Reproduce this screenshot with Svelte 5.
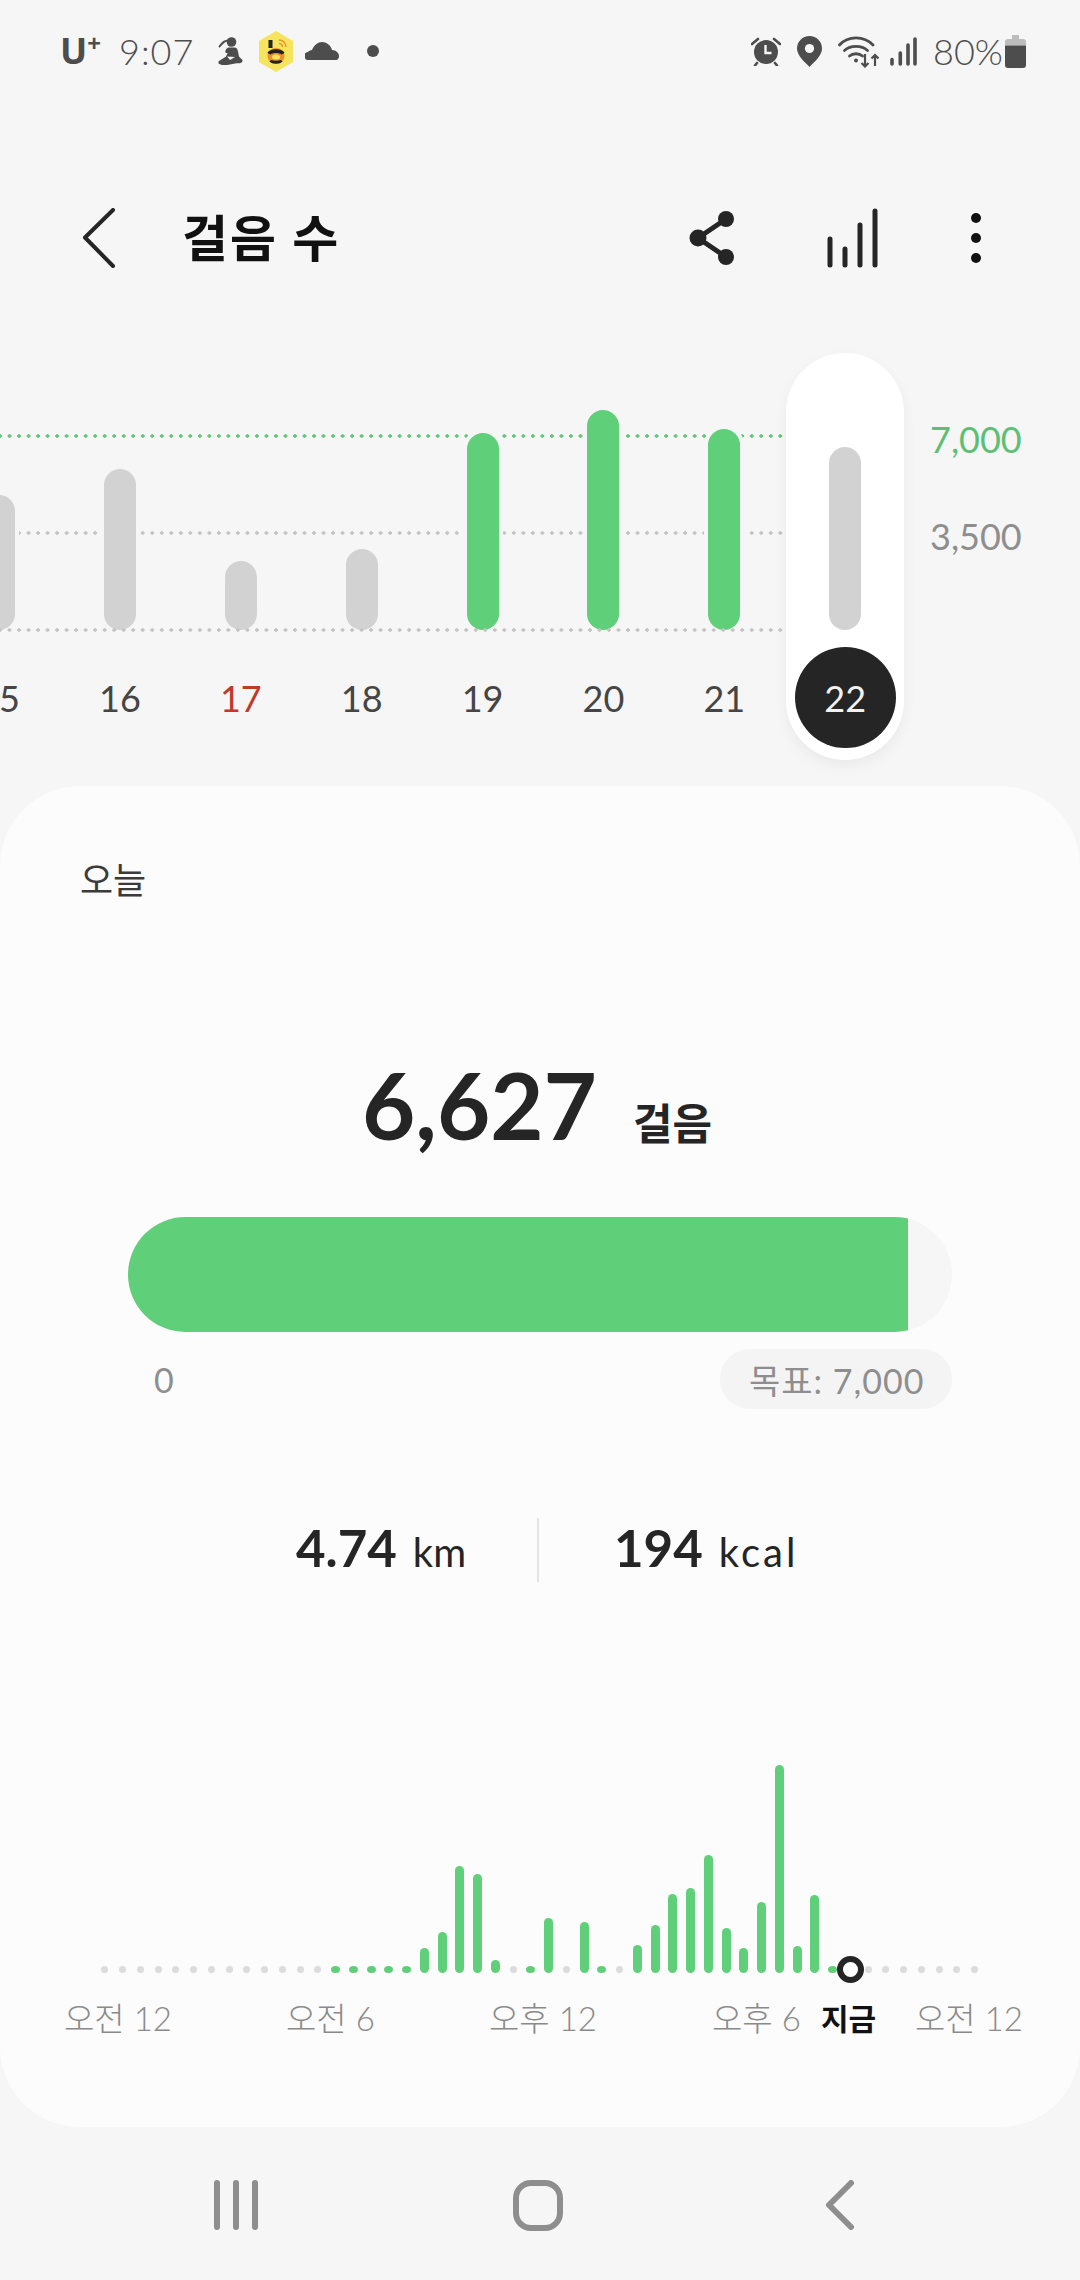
<script>
	const days = [
		{ label: '15', top: 495 },
		{ label: '16', top: 469 },
		{ label: '17', top: 561, sunday: true },
		{ label: '18', top: 549 },
		{ label: '19', top: 433, met: true },
		{ label: '20', top: 410, met: true },
		{ label: '21', top: 429, met: true },
		{ label: '22', top: 447, current: true }
	];

	// tops of the half-hour bars, by column; anything missing is a grey dot
	const barTops = {
		18: 1948, 19: 1932, 20: 1866, 21: 1874, 22: 1960, 25: 1918, 27: 1922,
		30: 1945, 31: 1925, 32: 1894, 33: 1888, 34: 1855, 35: 1928, 36: 1948,
		37: 1902, 38: 1765, 39: 1946, 40: 1895
	};
	const greenDots = [13, 14, 15, 16, 17, 24, 28, 41];
	const slots = Array.from({ length: 50 }, (_, i) => ({
		i,
		height: barTops[i] ? 1973 - barTops[i] : 0,
		kind: barTops[i] ? 'bar' : greenDots.includes(i) ? 'green' : i === 42 ? 'now' : 'idle'
	}));

	const hours = [
		{ text: '오전 12' },
		{ text: '오전 6' },
		{ text: '오후 12' },
		{ text: '오후 6' },
		{ text: '지금', strong: true },
		{ text: '오전 12' }
	];
</script>

<div class="page">
	<div class="status">
		<div class="status-left">
			<span class="carrier">U<sup>+</sup></span>
			<span class="clock">9:07</span>
			<svg class="ic-yoga" width="26" height="28" viewBox="0 0 26 28">
				<circle cx="14.500" cy="5" r="4.800" fill="#4d4d4d" />
				<path d="M11 3.500C7 3.500 5 6 2.500 9.500" fill="none" stroke="#4d4d4d" stroke-width="2" stroke-linecap="round" />
				<path d="M11 10.500h6.500c2 0 3 1.500 3.500 4l1 5 3 3c1 1 .8 2-.5 3-1.500 1-3.500.8-5 .8l-8 1.500c-3 .7-7 .7-9.500-1-1-1-.8-2 .3-3l6.500-4 2-4c-1 .7-2.500 0-2.500-1.300 0-1.500 1.200-3 3.200-4z" fill="#4d4d4d" />
				<path d="M10 19.500l8 .5-5 3z" fill="#f6f6f6" />
			</svg>
			<svg class="ic-hex" width="36" height="41" viewBox="0 0 36 41">
				<path d="M18 0l17 10v21L18 41 1 31V10z" fill="#f6e35e" />
				<rect x="10.500" y="9" width="4" height="8" fill="#222" />
				<ellipse cx="18" cy="25" rx="8.500" ry="8" fill="#e8912e" />
				<path d="M9.500 22c2-5 15-5 17 0l-3 1.500c-2-2-9-2-11 0z" fill="#222" />
				<path d="M11.500 30.500c3 3 10 3 13 0l-1.500-1.500c-3 1-7 1-10 0z" fill="#222" />
				<ellipse cx="18" cy="26" rx="4" ry="2.500" fill="#f6e35e" />
				<path d="M21 9a7 7 0 0 1 7 7M21 12.500a3.500 3.500 0 0 1 3.500 3.500" fill="none" stroke="#e8912e" stroke-width="1.300" />
			</svg>
			<svg class="ic-cloud" width="34" height="18" viewBox="0 0 34 18">
				<path d="M4 18a4 4 0 0 1-1-8c1-1 2-2 4-2 2-5 6-8 10-8s9 3 10 8c4 0 7 3 7 6 0 2-1 4-3 4z" fill="#4d4d4d" />
			</svg>
			<span class="notify-dot"></span>
		</div>
		<div class="status-right">
			<svg class="ic-alarm" width="30" height="30" viewBox="0 0 30 30">
				<circle cx="15" cy="16" r="12" fill="#4d4d4d" />
				<path d="M14.500 9v8h6" fill="none" stroke="#f6f6f6" stroke-width="2.400" />
				<path d="M1 8l6-5M29 8l-6-5" stroke="#4d4d4d" stroke-width="2.600" stroke-linecap="round" />
				<path d="M6 27l-2 2.500M24 27l2 2.500" stroke="#4d4d4d" stroke-width="2.600" stroke-linecap="round" />
			</svg>
			<svg class="ic-pin" width="25" height="31" viewBox="0 0 25 31">
				<path d="M12.500 0C5.500 0 0 5.500 0 12.500 0 20 8 26 12.500 31 17 26 25 20 25 12.500 25 5.500 19.500 0 12.500 0z" fill="#4d4d4d" />
				<circle cx="12.500" cy="12.500" r="4.600" fill="#f6f6f6" />
			</svg>
			<svg class="ic-wifi" width="43" height="33" viewBox="0 0 43 33">
				<g fill="none" stroke="#4d4d4d" stroke-width="2.800" stroke-linecap="round">
					<path d="M1.500 10C10 .5 26 .5 35 10" />
					<path d="M6.500 15.500c6-5.500 17-5.500 23 0" />
					<path d="M11.500 21c3.500-3 9.500-3 13 0" />
				</g>
				<circle cx="18" cy="25.500" r="2" fill="#4d4d4d" />
				<path d="M27 19v12.500M23.500 28l3.500 3.500 3.500-3.500M37 31V20M33.500 23.500l3.500-3.500 3.500 3.500" fill="none" stroke="#4d4d4d" stroke-width="2.200" />
			</svg>
			<svg class="ic-signal" width="27" height="29" viewBox="0 0 27 29">
				<g stroke="#4d4d4d" stroke-width="3.600" stroke-linecap="round">
					<path d="M2 22.500v4.500M10.300 16v11M18 8v19M25 2v25" />
				</g>
			</svg>
			<span class="battery-text">80%</span>
			<svg class="ic-battery" width="21" height="33" viewBox="0 0 21 33">
				<path d="M7 0h7v4h4a3 3 0 0 1 3 3v3.500H0V7a3 3 0 0 1 3-3h4z" fill="#bdbdbd" />
				<path d="M0 10.500h21V30a3 3 0 0 1-3 3H3a3 3 0 0 1-3-3z" fill="#4d4d4d" />
			</svg>
		</div>
	</div>

	<header class="bar">
		<svg class="back" width="34" height="60" viewBox="0 0 34 60">
			<path d="M31 2L3 29.500 31 58" fill="none" stroke="#252525" stroke-width="4" stroke-linecap="round" stroke-linejoin="round" />
		</svg>
		<h1>걸음 수</h1>
		<svg class="share" width="48" height="54" viewBox="0 0 48 54">
			<path d="M10 27L38 8M10 27l28 19" stroke="#252525" stroke-width="5" />
			<circle cx="10" cy="27" r="8.500" fill="#252525" />
			<circle cx="38" cy="8" r="8" fill="#252525" />
			<circle cx="38" cy="46" r="8" fill="#252525" />
		</svg>
		<svg class="trend" width="52" height="60" viewBox="0 0 52 60">
			<path d="M3 31v26M18 41v16M33 17v40M48 3v54" stroke="#252525" stroke-width="5" stroke-linecap="round" />
		</svg>
		<svg class="more" width="12" height="52" viewBox="0 0 12 52">
			<circle cx="6" cy="6" r="5" fill="#111" />
			<circle cx="6" cy="26" r="5" fill="#111" />
			<circle cx="6" cy="46" r="5" fill="#111" />
		</svg>
	</header>

	<section class="week">
		<div class="rule rule-goal"></div>
		<div class="rule rule-half"></div>
		<div class="columns">
			{#each days as day}
				<div class="col" class:current={day.current}>
					<div class="slot">
						<div class="day-bar" class:met={day.met} style="height: {630 - day.top}px"></div>
					</div>
					<div class="day" class:sunday={day.sunday}>{day.label}</div>
				</div>
			{/each}
		</div>
		<div class="rule rule-base"></div>
		<div class="scale">
			<span class="goal">7,000</span>
			<span class="half">3,500</span>
		</div>
	</section>

	<main class="card">
		<div class="today">오늘</div>

		<div class="total">
			<span class="steps">6,627</span>
			<span class="unit">걸음</span>
		</div>

		<div class="track"><div class="fill"></div></div>
		<div class="track-labels">
			<span class="zero">0</span>
			<span class="target">목표: 7,000</span>
		</div>

		<div class="stats">
			<div class="stat stat-distance"><b>4.74</b><span>km</span></div>
			<div class="stat stat-energy"><b>194</b><span>kcal</span></div>
		</div>

		<div class="plot">
			{#each slots as slot}
				<div class="tick">
					{#if slot.kind === 'bar'}
						<div class="hour-bar" style="height: {slot.height}px"></div>
					{:else if slot.kind === 'now'}
						<div class="now-ring"></div>
					{:else}
						<div class="hour-dot {slot.kind}"></div>
					{/if}
				</div>
			{/each}
		</div>
		<div class="hours">
			{#each hours as hour}
				<span class:strong={hour.strong}>{hour.text}</span>
			{/each}
		</div>
	</main>

	<nav class="softkeys">
		<svg width="48" height="50" viewBox="0 0 48 50">
			<path d="M5 3v44M24 3v44M43 3v44" stroke="#8e8e8e" stroke-width="6" stroke-linecap="round" />
		</svg>
		<svg class="home" width="50" height="51" viewBox="0 0 50 51">
			<rect x="3" y="3" width="44" height="45" rx="15" fill="none" stroke="#8e8e8e" stroke-width="6" />
		</svg>
		<svg class="recent" width="30" height="50" viewBox="0 0 30 50">
			<path d="M26 3L4 25l22 22" fill="none" stroke="#8e8e8e" stroke-width="6" stroke-linecap="round" stroke-linejoin="round" />
		</svg>
	</nav>
</div>

<style>
	:global(body) {
		margin: 0;
		background: #f6f6f6;
	}
	.page {
		width: 1080px;
		height: 2280px;
		display: flex;
		flex-direction: column;
		overflow: hidden;
		background: #f6f6f6;
		color: #252525;
		font-family: Lato, 'Noto Sans CJK KR', sans-serif;
	}

	.status {
		height: 102px;
		flex: none;
		display: flex;
		justify-content: space-between;
		align-items: center;
		padding: 0 54px 0 60px;
		color: #4d4d4d;
		box-sizing: border-box;
	}
	.status-left,
	.status-right {
		display: flex;
		align-items: center;
	}
	.carrier {
		font-family: 'Open Sans', sans-serif;
		font-size: 36px;
		font-weight: 700;
		line-height: 1;
		width: 59px;
	}
	.carrier sup {
		font-size: 24px;
		line-height: 0;
		vertical-align: 12px;
	}
	.clock {
		font-size: 36px;
		font-weight: 300;
		width: 98px;
		letter-spacing: 1px;
	}
	.ic-hex {
		margin-left: 15px;
	}
	.ic-cloud {
		margin-left: 11px;
	}
	.notify-dot {
		width: 12px;
		height: 12px;
		margin-left: 28px;
		border-radius: 50%;
		background: #4d4d4d;
	}
	.ic-pin {
		margin-left: 16px;
	}
	.ic-wifi {
		margin-left: 16px;
	}
	.ic-signal {
		margin-left: 9px;
	}
	.battery-text {
		font-size: 36px;
		font-weight: 300;
		margin-left: 16px;
		width: 72px;
	}

	.bar {
		height: 238px;
		flex: none;
		box-sizing: border-box;
		padding: 34px 0 0 82px;
		display: flex;
		align-items: center;
	}
	h1 {
		margin: 0 0 0 66px;
		font-size: 50px;
		font-weight: 700;
		line-height: 1;
		color: #111;
		width: 521px;
		letter-spacing: 2px;
	}
	.share {
		margin-left: -15px;
	}
	.trend {
		margin-left: 91px;
	}
	.more {
		margin-left: 91px;
	}

	.week {
		position: relative;
		height: 446px;
		flex: none;
	}
	.rule {
		position: absolute;
		left: 0;
		width: 786px;
		height: 4px;
		background-repeat: repeat-x;
		background-size: 9.530px 4px;
		background-position: -4.770px 0;
	}
	.rule-goal {
		top: 94px;
		background-image: radial-gradient(circle, #62c678 1.5px, transparent 2px);
	}
	.rule-half {
		top: 191px;
		background-image: radial-gradient(circle, #c4c4c4 1.5px, transparent 2px);
	}
	.rule-base {
		top: 288px;
		background-image: radial-gradient(circle, #c4c4c4 1.5px, transparent 2px);
	}
	.columns {
		position: relative;
		display: flex;
		margin-left: -60px;
		padding-top: 13px;
	}
	.col {
		width: 118px;
		margin-right: 2.900px;
		flex: none;
		height: 407px;
		border-radius: 59px;
		box-sizing: border-box;
	}
	.col.current {
		background: #fff;
		box-shadow: 0 6px 14px rgba(0, 0, 0, 0.05);
	}
	.slot {
		height: 277px;
		display: flex;
		align-items: flex-end;
		justify-content: center;
	}
	.day-bar {
		width: 32px;
		border-radius: 16px;
		background: #d2d2d2;
		box-shadow: 0 0 0 4px #f6f6f6;
	}
	.day-bar.met {
		background: #60cf79;
	}
	.current .day-bar {
		box-shadow: none;
	}
	.day {
		width: 101px;
		height: 101px;
		margin: 17px auto 0;
		display: flex;
		align-items: center;
		justify-content: center;
		font-size: 36px;
		color: #454545;
	}
	.day.sunday {
		color: #c0392b;
	}
	.current .day {
		border-radius: 50%;
		background: #252525;
		color: #f2f2f2;
	}
	.scale {
		position: absolute;
		left: 930px;
		top: 80px;
		display: flex;
		flex-direction: column;
		gap: 59px;
		font-size: 36px;
		line-height: 38px;
	}
	.goal {
		color: #5cc074;
	}
	.half {
		color: #8e8e8e;
	}

	.card {
		height: 1341px;
		flex: none;
		box-sizing: border-box;
		border-radius: 80px;
		background: #fcfcfc;
		padding-top: 72px;
	}
	.today {
		margin-left: 80px;
		font-size: 36px;
		line-height: 44px;
		color: #3b3b3b;
	}
	.total {
		display: flex;
		align-items: baseline;
		margin-top: 158px;
		height: 90px;
		padding-left: 362px;
	}
	.steps {
		font-size: 92px;
		font-weight: 700;
		line-height: 90px;
	}
	.unit {
		margin-left: 36px;
		font-size: 43px;
		font-weight: 700;
	}
	.track {
		margin: 67px 0 0 128px;
		width: 824px;
		height: 115px;
		border-radius: 57.500px;
		background: #f6f6f6;
		overflow: hidden;
	}
	.fill {
		width: 780px;
		height: 100%;
		background: #60cf79;
	}
	.track-labels {
		margin: 17px 128px 0 154px;
		height: 60px;
		display: flex;
		align-items: center;
		justify-content: space-between;
		color: #8e8e8e;
		font-size: 34px;
	}
	.target {
		width: 232px;
		height: 60px;
		box-sizing: border-box;
		padding-left: 29px;
		display: flex;
		align-items: center;
		border-radius: 30px;
		background: #f4f4f4;
		white-space: nowrap;
		letter-spacing: 1px;
	}
	.stats {
		margin-top: 109px;
		height: 64px;
		display: flex;
		align-items: center;
	}
	.stat {
		font-size: 40px;
		line-height: 60px;
		display: flex;
		align-items: baseline;
	}
	.stat b {
		font-size: 51px;
		font-weight: 700;
	}
	.stat span {
		margin-left: 16px;
	}
	.stat-distance {
		width: 243px;
		height: 64px;
		margin-left: 296px;
		box-sizing: border-box;
		border-right: 2px solid #e4e4e4;
	}
	.stat-energy {
		margin-left: 75px;
	}
	.stat-energy span {
		letter-spacing: 3px;
	}
	.plot {
		margin: 183px 0 0 96px;
		height: 208px;
		display: flex;
		align-items: flex-end;
	}
	.tick {
		width: 17.760px;
		flex: none;
		height: 100%;
		display: flex;
		align-items: flex-end;
		justify-content: center;
	}
	.hour-bar {
		width: 9px;
		border-radius: 4.500px;
		background: #60cf79;
	}
	.hour-dot {
		width: 7px;
		height: 7px;
		border-radius: 50%;
	}
	.hour-dot.idle {
		background: #dcdcdc;
	}
	.hour-dot.green {
		width: 9px;
		height: 7px;
		background: #60cf79;
	}
	.now-ring {
		flex: none;
		width: 27px;
		height: 27px;
		margin-bottom: -10px;
		box-sizing: border-box;
		border: 6px solid #252525;
		border-radius: 50%;
		background: #fff;
		position: relative;
	}
	.hours {
		margin: 25px 0 0 64px;
		display: grid;
		grid-template-columns: 222px 203px 223px 109px 94px 1fr;
		font-size: 33px;
		font-weight: 300;
		line-height: 40px;
		color: #8a8a8a;
	}
	.hours .strong {
		font-size: 30px;
		font-weight: 700;
		color: #111;
	}

	.softkeys {
		flex: 1;
		display: flex;
		box-sizing: border-box;
		padding: 53px 0 0 212px;
		align-items: flex-start;
	}
	.home {
		margin-left: 253px;
	}
	.recent {
		margin-left: 262px;
	}
</style>
